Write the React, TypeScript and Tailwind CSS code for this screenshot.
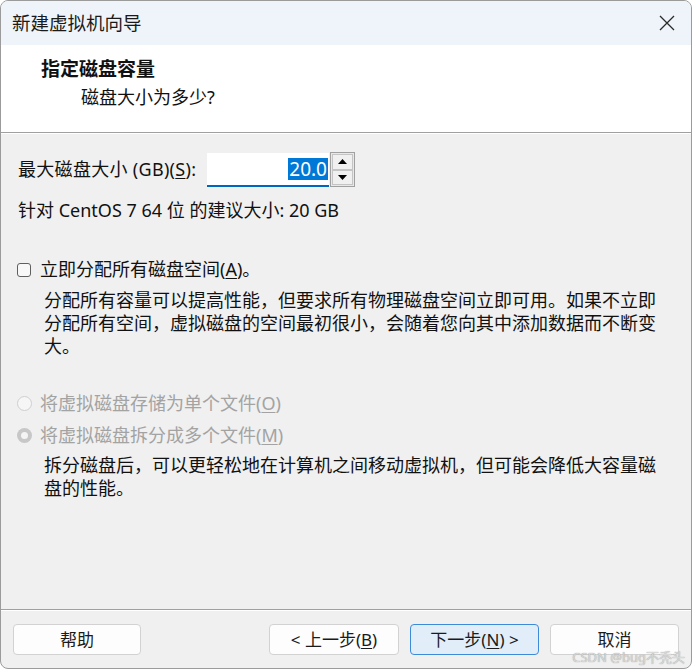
import React from "react";

const font = { fontFamily: '"Noto Sans", "Noto Sans CJK SC", sans-serif' };

const Key = ({ k }: { k: string }) => <span className="underline underline-offset-2">{k}</span>;

const WinButton = ({
  children,
  primary = false,
  className = "",
}: {
  children: React.ReactNode;
  primary?: boolean;
  className?: string;
}) => (
  <button
    className={
      "h-[31px] rounded-[4px] border text-[17px] leading-none text-[#1b1b1b] " +
      (primary ? "border-[#3c8ad8] bg-[#e1eef9] " : "border-[#d2d2d2] bg-[#fdfdfd] ") +
      className
    }
  >
    {children}
  </button>
);

export default function App() {
  return (
    <div
      style={font}
      className="flex h-[669px] w-[692px] flex-col overflow-hidden rounded-[8px] border border-[#9b9b9b] bg-[#f0f0f0] text-[18px] text-[#111]"
    >
      {/* title bar */}
      <div className="flex h-[44px] shrink-0 items-center justify-between bg-[#eef4f9] pl-[11px] pr-[13px]">
        <span className="text-[18.5px] leading-none text-[#1a1a1a]">新建虚拟机向导</span>
        <svg width="18" height="18" viewBox="0 0 18 18" className="mr-[2px]">
          <path d="M2 2 L16 16 M16 2 L2 16" stroke="#2a2a2a" strokeWidth="1.3" />
        </svg>
      </div>

      {/* header */}
      <div className="h-[87px] shrink-0 bg-white pt-[12px]">
        <div className="pl-[40px] text-[19px] font-bold leading-[24px]">指定磁盘容量</div>
        <div className="mt-[4px] pl-[80px] leading-[24px]">磁盘大小为多少?</div>
      </div>
      <div className="h-px shrink-0 bg-[#a0a0a0]" />
      <div className="h-px shrink-0 bg-white" />

      {/* body */}
      <div className="flex-1 pl-[16px] pt-[18px]">
        <div className="flex h-[35px] items-center">
          <span className="w-[190px] pl-[1px] leading-[23px] tracking-[0.3px]">
            最大磁盘大小 (GB)(<Key k="S" />):
          </span>
          <div className="flex h-[34px] w-[122px] items-center justify-end border-b-2 border-[#0067c0] bg-white pr-[1px]">
            <span className="bg-[#0078d7] px-[1px] text-[19px] leading-[22px] text-white">20.0</span>
          </div>
          <div className="ml-[1px] flex h-[35px] w-[25px] flex-col border border-[#a0a0a0] bg-[#e8e8e8] p-[1px]">
            <div className="flex flex-1 items-center justify-center border border-[#c4c4c4] bg-[#f0f0f0]">
              <svg width="9" height="5" viewBox="0 0 9 5">
                <path d="M0 5 L4.5 0 L9 5 Z" fill="#000" />
              </svg>
            </div>
            <div className="flex flex-1 items-center justify-center border border-[#c4c4c4] bg-[#f0f0f0]">
              <svg width="9" height="5" viewBox="0 0 9 5">
                <path d="M0 0 L4.5 5 L9 0 Z" fill="#000" />
              </svg>
            </div>
          </div>
        </div>

        <div className="mt-[12px] pl-[1px] leading-[23px]">针对 CentOS 7 64 位 的建议大小: 20 GB</div>

        <div className="mt-[36px] flex items-center leading-[23px]">
          <span className="mr-[9px] h-[14px] w-[14px] rounded-[3px] border border-[#5f5f5f] bg-[#f8f8f8]" />
          <span>
            立即分配所有磁盘空间(<Key k="A" />)。
          </span>
        </div>
        <p className="mt-[8px] box-content w-[622px] pl-[27px] leading-[23px]">
          分配所有容量可以提高性能，但要求所有物理磁盘空间立即可用。如果不立即分配所有空间，虚拟磁盘的空间最初很小，会随着您向其中添加数据而不断变大。
        </p>

        <div className="mt-[34px] flex items-center leading-[23px] text-[#a3a3a3]">
          <span className="mr-[8px] h-[15px] w-[15px] rounded-full border border-[#cfcfcf] bg-[#f6f6f6]" />
          <span>
            将虚拟磁盘存储为单个文件(<Key k="O" />)
          </span>
        </div>
        <div className="mt-[9px] flex items-center leading-[23px] text-[#a3a3a3]">
          <span className="mr-[8px] flex h-[15px] w-[15px] items-center justify-center rounded-full bg-[#c7c7c7]">
            <span className="h-[7px] w-[7px] rounded-full bg-[#f4f4f4]" />
          </span>
          <span>
            将虚拟磁盘拆分成多个文件(<Key k="M" />)
          </span>
        </div>
        <p className="mt-[7px] box-content w-[622px] pl-[27px] leading-[23px]">
          拆分磁盘后，可以更轻松地在计算机之间移动虚拟机，但可能会降低大容量磁盘的性能。
        </p>
      </div>

      {/* footer */}
      <div className="h-px shrink-0 bg-[#a0a0a0]" />
      <div className="h-px shrink-0 bg-white" />
      <div className="relative flex h-[57px] shrink-0 items-start justify-between px-[12px] pt-[13px]">
        <WinButton className="w-[128px]">帮助</WinButton>
        <div className="flex gap-[11px]">
          <WinButton className="w-[130px]">
            &lt; 上一步(<Key k="B" />)
          </WinButton>
          <WinButton primary className="w-[129px]">
            下一步(<Key k="N" />) &gt;
          </WinButton>
          <WinButton className="w-[129px]">取消</WinButton>
        </div>
        <span className="absolute bottom-[4px] right-[6px] text-[13px] leading-none text-[#d9d9d9] [text-shadow:0_0_1px_#8a8a8a]">
          CSDN @bug不秃头
        </span>
      </div>
    </div>
  );
}
